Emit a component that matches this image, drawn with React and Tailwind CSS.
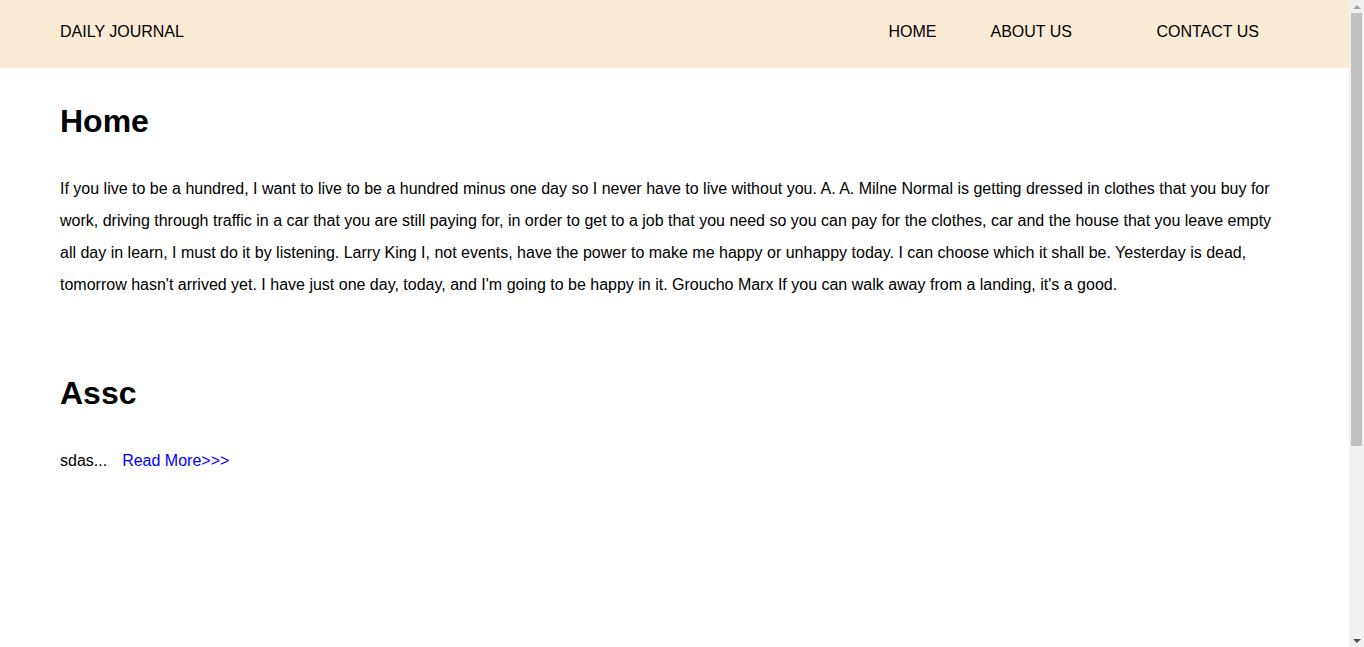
import React from 'react';

const posts = [
  {
    title: 'Home',
    body: "If you live to be a hundred, I want to live to be a hundred minus one day so I never have to live without you. A. A. Milne Normal is getting dressed in clothes that you buy for work, driving through traffic in a car that you are still paying for, in order to get to a job that you need so you can pay for the clothes, car and the house that you leave empty all day in learn, I must do it by listening. Larry King I, not events, have the power to make me happy or unhappy today. I can choose which it shall be. Yesterday is dead, tomorrow hasn't arrived yet. I have just one day, today, and I'm going to be happy in it. Groucho Marx If you can walk away from a landing, it's a good.",
  },
];

function Scrollbar() {
  return (
    <div className="w-[15px] h-[647px] bg-[#f1f1f1] flex flex-col items-center">
      <div className="h-[13px] flex items-center justify-center">
        <div className="w-0 h-0 border-l-[4px] border-r-[4px] border-b-[4px] border-l-transparent border-r-transparent border-b-[#a3a3a3]" />
      </div>
      <div className="w-[11px] h-[433px] bg-[#c1c1c1]" />
      <div className="flex-1" />
      <div className="h-[13px] flex items-center justify-center">
        <div className="w-0 h-0 border-l-[4px] border-r-[4px] border-t-[4px] border-l-transparent border-r-transparent border-t-[#505050]" />
      </div>
    </div>
  );
}

export default function App() {
  return (
    <div className="flex h-[647px] overflow-hidden bg-white text-black font-['Liberation_Sans',Arial,sans-serif]">
      <div className="w-[1349px]">
        {/* Header */}
        <div className="h-[68px] bg-[#faebd7] flex items-center pb-1 pl-[60px] pr-[90px] text-base">
          <div className="flex-1">DAILY JOURNAL</div>
          <nav className="flex items-center">
            <a className="w-[102px]">HOME</a>
            <a className="w-[166px]">ABOUT US</a>
            <a>CONTACT US</a>
          </nav>
        </div>

        <div className="px-[60px]">
          {posts.map((p) => (
            <div key={p.title}>
              <h1 className="mt-[35px] text-[32px] leading-[37px] font-bold">{p.title}</h1>
              <p className="mt-[33px] text-base leading-[32px]">{p.body}</p>
            </div>
          ))}

          <h1 className="mt-[74px] text-[32px] leading-[37px] font-bold">Assc</h1>
          <p className="mt-[33px] text-base leading-[32px]">
            sdas...
            <a className="ml-[15px] text-[#0000ff]">Read More&gt;&gt;&gt;</a>
          </p>
        </div>
      </div>
      <Scrollbar />
    </div>
  );
}
